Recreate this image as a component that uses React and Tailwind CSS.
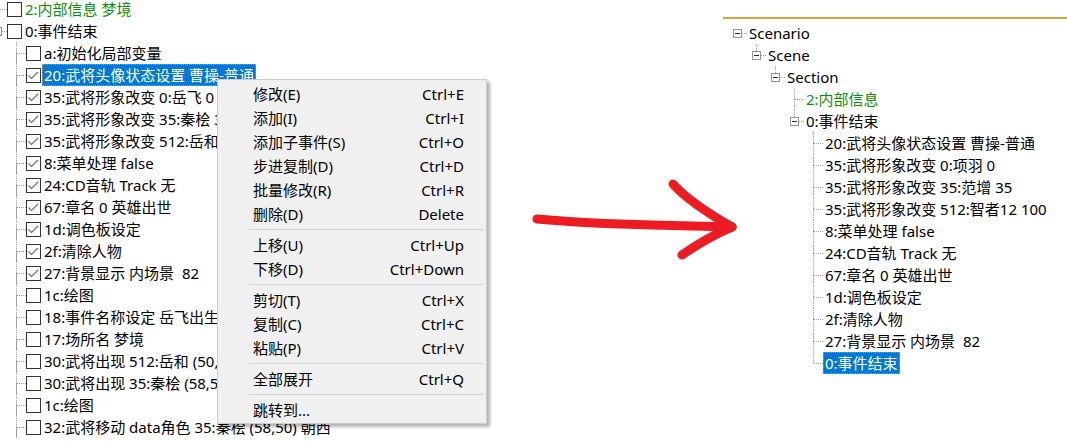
import React from "react";

const leftRows = [
  { level: 0, text: "2:内部信息 梦境", green: true, top: true, bottom: true },
  { level: 0, text: "0:事件结束", box: true, top: true },
  { level: 1, text: "a:初始化局部变量" },
  { level: 1, text: "20:武将头像状态设置 曹操-普通", checked: true, selected: true },
  { level: 1, text: "35:武将形象改变 0:岳飞 0", checked: true },
  { level: 1, text: "35:武将形象改变 35:秦桧 35", checked: true },
  { level: 1, text: "35:武将形象改变 512:岳和 100", checked: true },
  { level: 1, text: "8:菜单处理 false", checked: true },
  { level: 1, text: "24:CD音轨 Track 无", checked: true },
  { level: 1, text: "67:章名 0 英雄出世", checked: true },
  { level: 1, text: "1d:调色板设定", checked: true },
  { level: 1, text: "2f:清除人物", checked: true },
  { level: 1, text: "27:背景显示 内场景  82", checked: true },
  { level: 1, text: "1c:绘图" },
  { level: 1, text: "18:事件名称设定 岳飞出生" },
  { level: 1, text: "17:场所名 梦境" },
  { level: 1, text: "30:武将出现 512:岳和 (50,50) 朝西" },
  { level: 1, text: "30:武将出现 35:秦桧 (58,50) 朝西" },
  { level: 1, text: "1c:绘图" },
  { level: 1, text: "32:武将移动 data角色 35:秦桧 (58,50) 朝西" },
];

const rightRows = [
  { level: 0, text: "Scenario", box: true },
  { level: 1, text: "Scene", box: true, top: true },
  { level: 2, text: "Section", box: true, top: true },
  { level: 3, text: "2:内部信息", green: true, top: true, bottom: true },
  { level: 3, text: "0:事件结束", box: true, top: true },
  { level: 4, text: "20:武将头像状态设置 曹操-普通" },
  { level: 4, text: "35:武将形象改变 0:项羽 0" },
  { level: 4, text: "35:武将形象改变 35:范增 35" },
  { level: 4, text: "35:武将形象改变 512:智者12 100" },
  { level: 4, text: "8:菜单处理 false" },
  { level: 4, text: "24:CD音轨 Track 无" },
  { level: 4, text: "67:章名 0 英雄出世" },
  { level: 4, text: "1d:调色板设定" },
  { level: 4, text: "2f:清除人物" },
  { level: 4, text: "27:背景显示 内场景  82" },
  { level: 4, text: "0:事件结束", selected: true, last: true },
];

const menu = [
  ["修改(E)", "Ctrl+E"],
  ["添加(I)", "Ctrl+I"],
  ["添加子事件(S)", "Ctrl+O"],
  ["步进复制(D)", "Ctrl+D"],
  ["批量修改(R)", "Ctrl+R"],
  ["删除(D)", "Delete"],
  null,
  ["上移(U)", "Ctrl+Up"],
  ["下移(D)", "Ctrl+Down"],
  null,
  ["剪切(T)", "Ctrl+X"],
  ["复制(C)", "Ctrl+C"],
  ["粘贴(P)", "Ctrl+V"],
  null,
  ["全部展开", "Ctrl+Q"],
  null,
  ["跳转到...", ""],
];

const dot = { stroke: "#a0a0a0", strokeWidth: 1, strokeDasharray: "1 1" };

function Connector({ top, bottom, box, own }) {
  return (
    <svg width="19" height="22" className="block shrink-0">
      {own && top && <line x1="9.5" y1="0" x2="9.5" y2={box ? 7 : 12} {...dot} />}
      {own && bottom && <line x1="9.5" y1={box ? 16 : 11} x2="9.5" y2="22" {...dot} />}
      {own && <line x1={box ? 14 : 10} y1="11.5" x2="19" y2="11.5" {...dot} />}
      {box && (
        <g>
          <rect x="5.5" y="7.5" width="8" height="8" fill="#fdfdfd" stroke="#939393" />
          <line x1="7" y1="11.5" x2="12" y2="11.5" stroke="#2f2f2f" />
        </g>
      )}
    </svg>
  );
}

function CheckBox({ checked }) {
  return (
    <div className="w-[15px] h-[15px] shrink-0 border border-[#333] bg-white">
      {checked && (
        <svg width="13" height="13" className="block">
          <polyline points="1.5,6.5 4.5,9.5 11,3" fill="none" stroke="#707070" strokeWidth="1.2" />
        </svg>
      )}
    </div>
  );
}

function Label({ text, green, selected }) {
  return (
    <span
      className={`h-[22px] leading-[20px] px-px border whitespace-pre ${
        selected
          ? "bg-[#0078d7] text-white border-dotted border-[#ff8728]"
          : green
          ? "border-transparent text-[#0b8f0b]"
          : "border-transparent text-black"
      }`}
    >
      {text}
    </span>
  );
}

function TreeRow({ row, check }) {
  const cols = [];
  for (let i = 0; i < row.level; i++) cols.push(<Connector key={i} />);
  const bottom = row.bottom ?? (check && row.level === 1) ?? false;
  return (
    <div className="flex items-center h-[22px]">
      {cols}
      <Connector own top={row.top ?? (row.level > 0)} bottom={bottom || (!row.last && row.level === 4)} box={row.box} />
      {check && (
        <div className="mr-px">
          <CheckBox checked={row.checked} />
        </div>
      )}
      <Label text={row.text} green={row.green} selected={row.selected} />
    </div>
  );
}

function LeftTree() {
  return (
    <div className="relative w-[723px] shrink-0 overflow-hidden">
      <div className="-ml-[12px] -mt-[2px] flex flex-col">
        {leftRows.map((r, i) => (
          <div key={i} className="relative">
            {r.level === 1 && (
              <svg width="19" height="22" className="absolute left-[19px] top-0 pointer-events-none">
                <line x1="9.5" y1="0" x2="9.5" y2="22" {...dot} />
              </svg>
            )}
            <TreeRow row={r} check />
          </div>
        ))}
      </div>
    </div>
  );
}

function RightTree() {
  return (
    <div className="flex-1 mt-[17px] border-t-2 border-[#d6a540] pl-[5px] pt-[3px]">
      {rightRows.map((r, i) => (
        <TreeRow key={i} row={r} />
      ))}
    </div>
  );
}

function ContextMenu() {
  return (
    <div className="absolute left-[217px] top-[79px] w-[270px] bg-[#f0f0f0] border border-[#cbcbcb] pt-[2px] pb-px shadow-[3px_3px_3px_rgba(0,0,0,0.3)]">
      {menu.map((m, i) =>
        m ? (
          <div key={i} className="flex items-center justify-between h-[24px] pl-[35px] pr-[22px] text-black">
            <span>{m[0]}</span>
            <span>{m[1]}</span>
          </div>
        ) : (
          <div key={i} className="h-[7px] flex items-center ml-[31px] mr-[2px]">
            <div className="h-px w-full bg-[#d4d4d4]" />
          </div>
        )
      )}
    </div>
  );
}

function Arrow() {
  return (
    <svg width="215" height="92" className="absolute left-[530px] top-[175px]">
      <g fill="none" stroke="#ed1c24" strokeWidth="9" strokeLinecap="round" strokeLinejoin="round">
        <path d="M7,44 C40,47 80,49 123,50 L202,52" />
        <path d="M143,9 Q160,28 202,52" />
        <path d="M152,80 Q178,62 202,52" />
      </g>
    </svg>
  );
}

export default function App() {
  return (
    <div className="relative flex w-[1067px] h-[444px] overflow-hidden bg-white text-[15px] font-['Noto_Sans','Noto_Sans_CJK_SC',sans-serif]">
      <LeftTree />
      <RightTree />
      <Arrow />
      <ContextMenu />
    </div>
  );
}
